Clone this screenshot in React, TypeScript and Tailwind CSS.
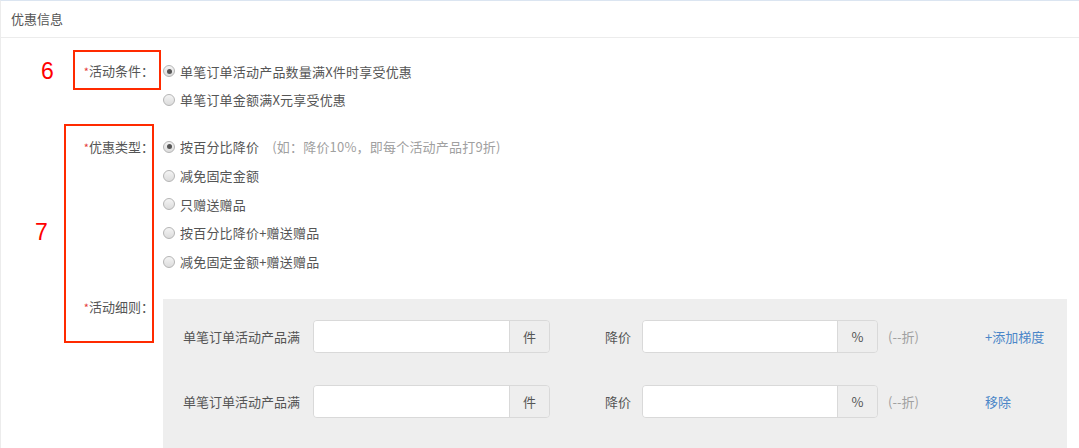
import type { ReactNode } from "react";

function Radio({ checked, children }: { checked?: boolean; children: ReactNode }) {
  return (
    <label className="flex items-center h-[28.75px]">
      <span className="w-[12px] h-[12px] rounded-full border border-[#b5b5b5] bg-gradient-to-b from-[#f4f4f4] to-[#dcdcdc] flex items-center justify-center">
        {checked && <span className="w-[5px] h-[5px] rounded-full bg-[#555]" />}
      </span>
      <span className="ml-[5px] tracking-[0.2px]">{children}</span>
    </label>
  );
}

function FieldLabel({ children }: { children: ReactNode }) {
  return (
    <div className="w-[162px] shrink-0 text-right pr-[9px] leading-[16px]">
      <span className="text-[#e4393c] text-[11px] align-top">*</span>
      {children}：
    </div>
  );
}

function InputGroup({ unit, width }: { unit: string; width: string }) {
  return (
    <div className={`flex h-[33px] ${width} border border-[#d9d9d9] rounded-[4px] overflow-hidden`}>
      <input className="flex-1 min-w-0 bg-white outline-none px-2" />
      <span className="w-[40px] border-l border-[#d9d9d9] bg-[#eee] flex items-center justify-center">
        {unit}
      </span>
    </div>
  );
}

function RuleRow({ action }: { action: string }) {
  return (
    <div className="flex items-center h-[33px]">
      <span className="w-[130px] shrink-0">单笔订单活动产品满</span>
      <InputGroup unit="件" width="w-[237px]" />
      <span className="w-[92px] shrink-0 text-right pr-[11px]">降价</span>
      <InputGroup unit="%" width="w-[236px]" />
      <span className="w-[107px] shrink-0 pl-[10px] text-[#a0a0a0]">(--折)</span>
      <a className="text-[#4b86c8] cursor-pointer">{action}</a>
    </div>
  );
}

export default function App() {
  return (
    <div
      className="relative w-full h-[448px] overflow-hidden bg-white border-t border-[#dbe5f1] border-l border-l-[#ececec] text-[13px] text-[#555]"
      style={{ fontFamily: '"Noto Sans CJK SC", "Noto Sans", sans-serif' }}
    >
      <div className="h-[37px] border-b border-[#ececec] px-[10px] flex items-center">优惠信息</div>

      <div className="pt-[19px]">
        <div className="flex">
          <div className="pt-[6px]">
            <FieldLabel>活动条件</FieldLabel>
          </div>
          <div className="flex flex-col">
            <Radio checked>单笔订单活动产品数量满X件时享受优惠</Radio>
            <Radio>单笔订单金额满X元享受优惠</Radio>
          </div>
        </div>

        <div className="flex mt-[18px]">
          <div className="pt-[6px]">
            <FieldLabel>优惠类型</FieldLabel>
          </div>
          <div className="flex flex-col">
            <Radio checked>
              按百分比降价
              <span className="ml-[13px] text-[#a0a0a0]">(如：降价10%，即每个活动产品打9折)</span>
            </Radio>
            <Radio>减免固定金额</Radio>
            <Radio>只赠送赠品</Radio>
            <Radio>按百分比降价+赠送赠品</Radio>
            <Radio>减免固定金额+赠送赠品</Radio>
          </div>
        </div>

        <div className="flex mt-[23px]">
          <FieldLabel>活动细则</FieldLabel>
          <div className="w-[904px] bg-[#eeeeee] pl-[20px] pt-[21px] pb-[40px] flex flex-col gap-[32px]">
            <RuleRow action="+添加梯度" />
            <RuleRow action="移除" />
          </div>
        </div>
      </div>

      {/* annotations */}
      <div className="absolute left-[72px] top-[49px] w-[88px] h-[40px] border-2 border-[#ff2a00]" />
      <div className="absolute left-[63px] top-[123px] w-[90px] h-[219px] border-2 border-[#ff2a00]" />
      <span
        className="absolute left-[40px] top-[53px] text-[23px] text-[#ff0000]"
        style={{ fontFamily: '"Liberation Sans", sans-serif' }}
      >
        6
      </span>
      <span
        className="absolute left-[34px] top-[214px] text-[23px] text-[#ff0000]"
        style={{ fontFamily: '"Liberation Sans", sans-serif' }}
      >
        7
      </span>
    </div>
  );
}
